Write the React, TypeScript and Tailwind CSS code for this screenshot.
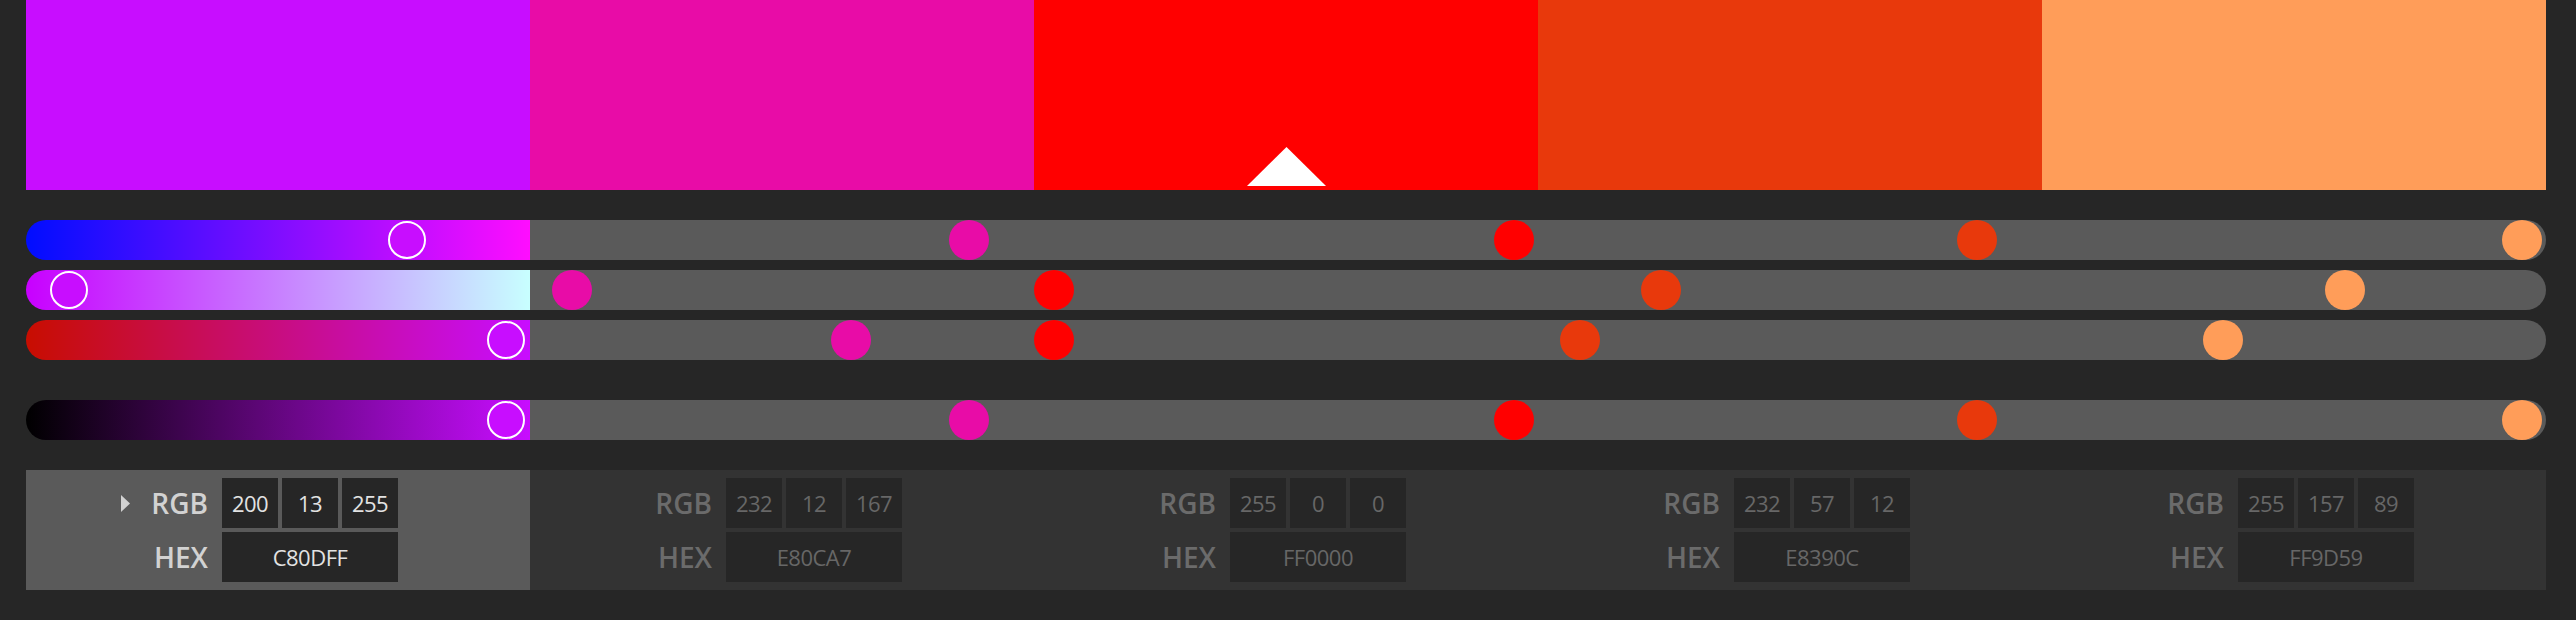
import React from "react";

type Rgb = [number, number, number];

const colors: { rgb: Rgb; hex: string }[] = [
  { rgb: [200, 13, 255], hex: "C80DFF" },
  { rgb: [232, 12, 167], hex: "E80CA7" },
  { rgb: [255, 0, 0], hex: "FF0000" },
  { rgb: [232, 57, 12], hex: "E8390C" },
  { rgb: [255, 157, 89], hex: "FF9D59" },
];

const active = 0;

const css = (c: Rgb) => `rgb(${c[0]},${c[1]},${c[2]})`;

// each track row: value taken from the colour, and the gradient for the active segment
const rows: { value: (c: Rgb) => number; grad: (c: Rgb) => [Rgb, Rgb] }[] = [
  { value: (c) => c[0], grad: (c) => [[0, c[1], c[2]], [255, c[1], c[2]]] },
  { value: (c) => c[1], grad: (c) => [[c[0], 0, c[2]], [c[0], 255, c[2]]] },
  { value: (c) => c[2], grad: (c) => [[c[0], c[1], 0], [c[0], c[1], 255]] },
  { value: (c) => Math.max(...c), grad: (c) => [[0, 0, 0], c] },
];

function Track({ row, last }: { row: (typeof rows)[number]; last?: boolean }) {
  return (
    <div className={`flex h-[40px] ${last ? "mt-[30px]" : ""}`}>
      {colors.map((c, i) => {
        const v = row.value(c.rgb);
        const left = (v / 255) * 460;
        const [a, b] = row.grad(c.rgb);
        const isActive = i === active;
        return (
          <div
            key={i}
            className={`relative flex-1 ${i === 0 ? "rounded-l-full" : ""} ${i === 4 ? "rounded-r-full" : ""} ${
              isActive ? "" : "bg-[#5a5a5a]"
            }`}
            style={isActive ? { background: `linear-gradient(to right, ${css(a)}, ${css(b)})` } : undefined}
          >
            {isActive ? (
              <div
                className="absolute top-[1px] w-[38px] h-[38px] rounded-full border-2 border-white"
                style={{ left: left + 1, background: css(c.rgb) }}
              />
            ) : (
              <div
                className="absolute top-0 w-[40px] h-[40px] rounded-full"
                style={{ left, background: css(c.rgb) }}
              />
            )}
          </div>
        );
      })}
    </div>
  );
}

function Field({ children, wide, on }: { children: React.ReactNode; wide?: boolean; on: boolean }) {
  return (
    <div
      className={`${wide ? "w-[176px]" : "w-[56px]"} h-[50px] bg-[#262626] flex items-center justify-center text-[22px] tracking-[-0.5px] ${
        on ? "text-[#e2e2e2]" : "text-[#676767]"
      }`}
    >
      {children}
    </div>
  );
}

export default function App() {
  return (
    <div className="w-[2576px] h-[620px] bg-[#262626] pl-[26px] font-['Open_Sans',sans-serif]">
      <div className="w-[2520px] flex flex-col">
        <div className="flex h-[190px]">
          {colors.map((c, i) => (
            <div key={i} className="relative flex-1 flex justify-center items-end pb-[4px]" style={{ background: css(c.rgb) }}>
              {i === 2 && (
                <svg width="79" height="39" viewBox="0 0 79 39">
                  <polygon points="0,39 39.5,0 79,39" fill="#ffffff" />
                </svg>
              )}
            </div>
          ))}
        </div>

        <div className="mt-[30px] flex flex-col gap-[10px]">
          {rows.map((r, i) => (
            <Track key={i} row={r} last={i === 3} />
          ))}
        </div>

        <div className="mt-[30px] h-[120px] flex bg-[#333333]">
          {colors.map((c, i) => {
            const on = i === active;
            const label = `w-[196px] pr-[14px] flex items-center justify-end gap-[21px] text-[28px] font-semibold ${
              on ? "text-[#d2d2d2]" : "text-[#6b6b6b]"
            }`;
            return (
              <div key={i} className={`flex-1 flex flex-col justify-center gap-1 ${on ? "bg-[#5a5a5a]" : ""}`}>
                <div className="flex items-center">
                  <div className={label}>
                    {on && (
                      <svg width="9" height="17" viewBox="0 0 9 17">
                        <polygon points="0,0 9,8.5 0,17" fill="#d2d2d2" />
                      </svg>
                    )}
                    <span>RGB</span>
                  </div>
                  <div className="flex gap-1">
                    {c.rgb.map((n, k) => (
                      <Field key={k} on={on}>
                        {n}
                      </Field>
                    ))}
                  </div>
                </div>
                <div className="flex items-center">
                  <div className={label}>
                    <span>HEX</span>
                  </div>
                  <Field wide on={on}>
                    {c.hex}
                  </Field>
                </div>
              </div>
            );
          })}
        </div>
      </div>
    </div>
  );
}
